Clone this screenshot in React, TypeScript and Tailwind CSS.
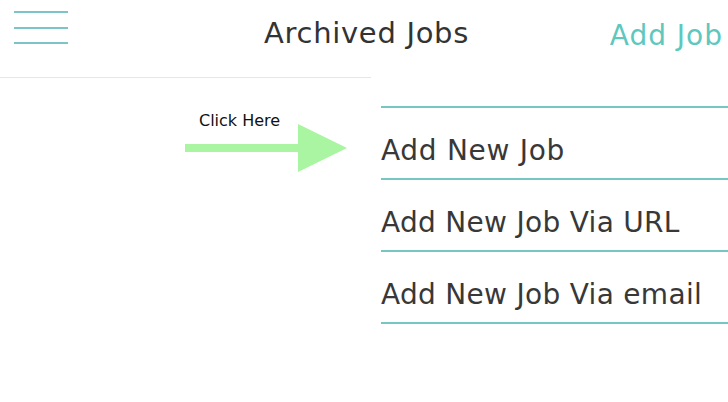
const menuItems = ['Add New Job', 'Add New Job Via URL', 'Add New Job Via email']

function Hamburger() {
  return (
    <div className="flex flex-col gap-[13.5px] w-[54px] pt-[11px]">
      <span className="block h-[2px] bg-[#7cc4c8]" />
      <span className="block h-[2px] bg-[#7cc4c8]" />
      <span className="block h-[2px] bg-[#7cc4c8]" />
    </div>
  )
}

function ClickHereArrow() {
  return (
    <div className="absolute left-[185px] top-[112px] w-[162px]">
      <p className="pl-[14px] text-[16px] leading-[18px] text-[#111] font-['DejaVu_Sans',sans-serif]">Click Here</p>
      <svg width="162" height="48" viewBox="0 0 162 48" className="-mt-[6px]">
        <rect x="0" y="20" width="116" height="8" fill="#a9f5a1" />
        <polygon points="113,0 162,24 113,48" fill="#a9f5a1" />
      </svg>
    </div>
  )
}

export default function App() {
  return (
    <div className="relative w-[728px] h-[402px] bg-white overflow-hidden font-['DejaVu_Sans',sans-serif]">
      <header className="grid grid-cols-[1fr_auto_1fr] items-start h-[78px] border-b border-[#e6e6e6] pl-[14px] pr-[5px]">
        <Hamburger />
        <h1 className="pt-[19px] pr-[4px] text-[29px] leading-[29px] text-[#333] tracking-[0.7px]">Archived Jobs</h1>
        <div className="flex justify-end pt-[22px]">
          <span className="text-[28px] leading-[28px] text-[#5ec7be] tracking-[1px]">Add Job</span>
        </div>
      </header>

      <ClickHereArrow />

      <nav className="absolute left-[371px] right-0 top-[77px] bg-white pl-[10px] pt-[29px]">
        <ul className="border-t-2 border-[#78c6c4]">
          {menuItems.map((item, i) => (
            <li
              key={item}
              className={`h-[72px] border-b-2 border-[#78c6c4] pt-[29px] text-[28px] leading-[28px] text-[#383838] whitespace-nowrap ${
                i === 0 ? 'tracking-[0.7px]' : 'tracking-[0.3px]'
              }`}
            >
              {item}
            </li>
          ))}
        </ul>
      </nav>
    </div>
  )
}
